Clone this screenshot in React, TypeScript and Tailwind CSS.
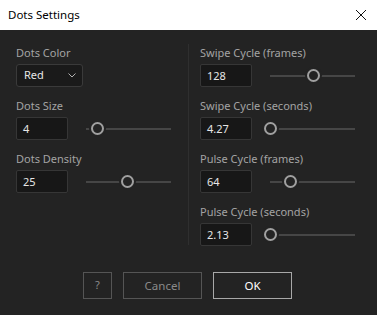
import React from 'react';

const font = { fontFamily: '"Noto Sans", "Open Sans", sans-serif' };

interface FieldProps {
  label: string;
  value: string;
  knob: number; // knob centre, px from track start
}

const Slider: React.FC<{ knob: number }> = ({ knob }) => (
  <div className="relative w-[85px] h-[23px] ml-[18px]">
    <div className="absolute left-0 right-0 top-[11px] h-[2px] bg-[#464646]" />
    <div
      className="absolute top-[5px] w-[13px] h-[13px] rounded-full border-2 border-[#a0a0a0] bg-[#232323] shadow-[0_0_0_2px_#232323]"
      style={{ left: knob - 6.5 }}
    />
  </div>
);

const Field: React.FC<FieldProps> = ({ label, value, knob }) => (
  <div className="flex flex-col">
    <div className="h-[16px] leading-[16px] text-[11px] text-[#a3a3a3] mb-[3px]">{label}</div>
    <div className="flex items-center">
      <div className="w-[52px] h-[23px] rounded-[2px] border border-[#363636] bg-[#171717] pl-[6px] text-[11px] leading-[21px] text-[#e6e6e6]">
        {value}
      </div>
      <Slider knob={knob} />
    </div>
  </div>
);

export default function App() {
  return (
    <div className="w-[377px] h-[315px] flex flex-col bg-[#232323] overflow-hidden" style={font}>
      {/* Title bar */}
      <div className="h-[30px] bg-white flex items-center justify-between pl-[8px] pr-[9px]">
        <span className="text-[11.5px] text-black">Dots Settings</span>
        <svg width="12" height="12" viewBox="0 0 12 12" className="mr-[1px]">
          <path d="M1 1 L11 11 M11 1 L1 11" stroke="#111" strokeWidth="1" fill="none" />
        </svg>
      </div>

      {/* Body */}
      <div className="flex px-[16px] pt-[15px]">
        <div className="w-[155px] flex flex-col gap-[11px]">
          <div className="flex flex-col">
            <div className="h-[16px] leading-[16px] text-[11px] text-[#a3a3a3] mb-[3px]">Dots Color</div>
            <div className="w-[67px] h-[23px] rounded-[3px] border border-[#3a3a3a] bg-[#1a1a1a] flex items-center justify-between pl-[7px] pr-[6px]">
              <span className="text-[11px] text-[#e6e6e6]">Red</span>
              <svg width="8" height="5" viewBox="0 0 8 5">
                <path d="M0.5 0.5 L4 4 L7.5 0.5" stroke="#b0b0b0" strokeWidth="1" fill="none" />
              </svg>
            </div>
          </div>
          <Field label="Dots Size" value="4" knob={11} />
          <Field label="Dots Density" value="25" knob={41} />
        </div>

        <div className="w-[1px] h-[201px] bg-[#2f2f2f] ml-[17px] mt-[-1px]" />

        <div className="w-[155px] ml-[11px] flex flex-col gap-[11px]">
          <Field label="Swipe Cycle (frames)" value="128" knob={43} />
          <Field label="Swipe Cycle (seconds)" value="4.27" knob={0} />
          <Field label="Pulse Cycle (frames)" value="64" knob={20} />
          <Field label="Pulse Cycle (seconds)" value="2.13" knob={0} />
        </div>
      </div>

      {/* Buttons */}
      <div className="flex gap-[11px] pl-[83px] mt-[26px]">
        <button className="w-[29px] h-[27px] border border-[#555] text-[11px] text-[#8a8a8a]">?</button>
        <button className="w-[79px] h-[27px] border border-[#555] text-[11.5px] text-[#8a8a8a]">Cancel</button>
        <button className="w-[79px] h-[27px] border border-[#a8a8a8] text-[11.5px] text-white">OK</button>
      </div>
    </div>
  );
}
